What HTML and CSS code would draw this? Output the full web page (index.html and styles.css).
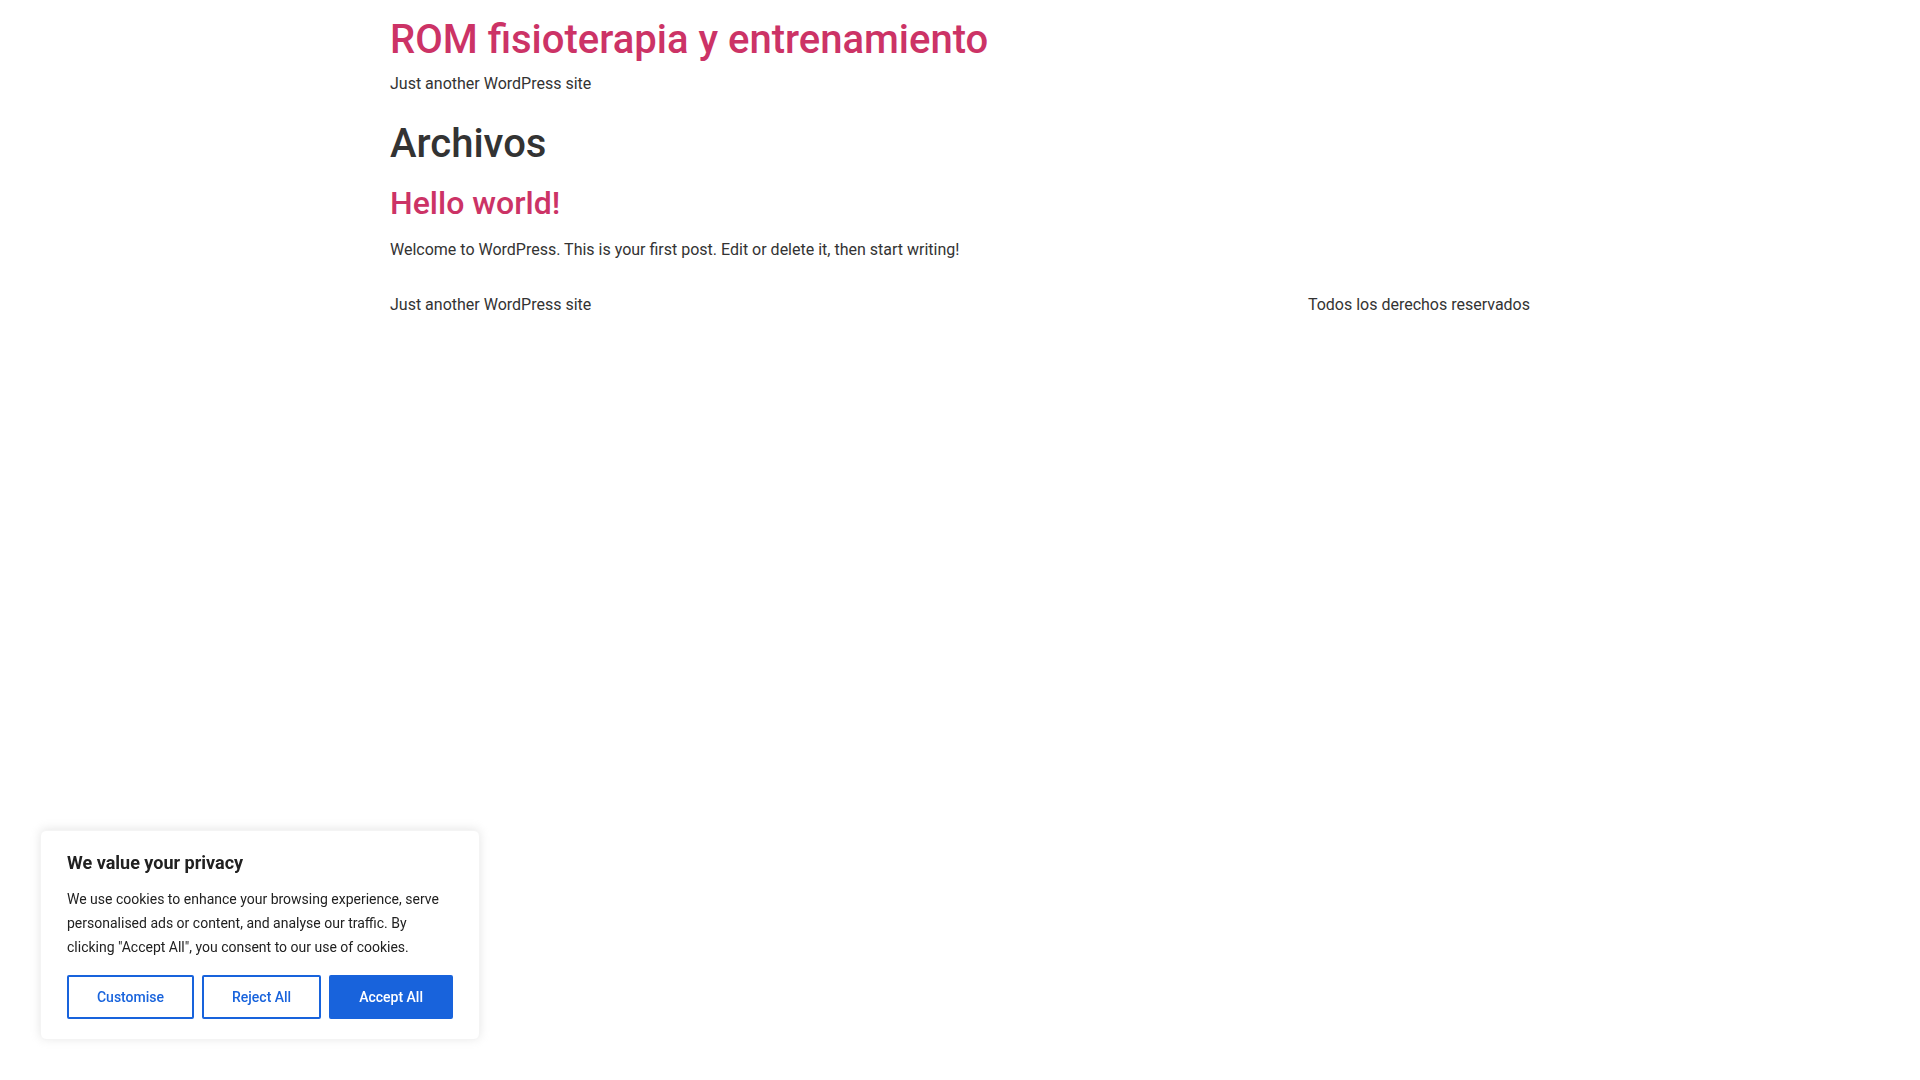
FILE: index.html
```html
<!DOCTYPE html>
<html lang="es">
<head>
<meta charset="utf-8">
<title>Archivos - ROM fisioterapia y entrenamiento</title>
<link rel="stylesheet" href="styles.css">
</head>
<body>
<header class="site-header">
  <div class="site-branding">
    <h1 class="site-title"><a href="#">ROM fisioterapia y entrenamiento</a></h1>
    <p class="site-description">Just another WordPress site</p>
  </div>
</header>
<main class="site-main">
  <div class="page-header">
    <h1 class="entry-title">Archivos</h1>
  </div>
  <div class="page-content">
    <article class="post">
      <h2 class="post-title"><a href="#">Hello world!</a></h2>
      <p>Welcome to WordPress. This is your first post. Edit or delete it, then start writing!</p>
    </article>
  </div>
</main>
<footer class="site-footer">
  <div class="footer-inner">
    <p class="footer-description">Just another WordPress site</p>
    <p class="copyright">Todos los derechos reservados</p>
  </div>
</footer>

<div class="cky-consent">
  <div class="cky-bar">
    <p class="cky-title">We value your privacy</p>
    <p class="cky-notice">We use cookies to enhance your browsing experience, serve personalised ads or content, and analyse our traffic. By clicking "Accept All", you consent to our use of cookies.</p>
    <div class="cky-buttons">
      <button class="cky-btn cky-btn-outline">Customise</button>
      <button class="cky-btn cky-btn-outline">Reject All</button>
      <button class="cky-btn cky-btn-accept">Accept All</button>
    </div>
  </div>
</div>
</body>
</html>
```
FILE: styles.css
```css
html, body {
  margin: 0;
  padding: 0;
}
body {
  background: #fff;
  color: #333;
  font-family: Roboto, "Liberation Sans", sans-serif;
  font-size: 16px;
  line-height: 1.5;
}
a {
  color: #c36;
  text-decoration: none;
}
h1, h2 {
  font-weight: 500;
  line-height: 1.2;
  margin: 0;
}
h1 { font-size: 40px; }
h2 { font-size: 32px; }
p { margin: 0; }

.site-header,
.site-main,
.site-footer {
  max-width: 1140px;
  margin: 0 auto;
  box-sizing: border-box;
}
.site-header {
  padding: 16px 0;
}
.site-title {
  margin-bottom: 8px;
}
.site-main {
  padding-top: 8px;
}
.page-header .entry-title {
  margin-bottom: 16px;
}
.post-title {
  margin-bottom: 16px;
}
.post p {
  margin-bottom: 14.4px;
}
.site-footer {
  padding: 16px 0;
}
.footer-inner {
  display: flex;
  justify-content: space-between;
  align-items: center;
}

/* Cookie banner */
.cky-consent {
  position: fixed;
  left: 40px;
  bottom: 40px;
  width: 440px;
  z-index: 100;
}
.cky-bar {
  background: #fff;
  border: 1px solid #f4f4f4;
  border-radius: 6px;
  box-shadow: 0 -1px 10px 0 rgba(172, 171, 171, 0.3);
  padding: 20px 26px;
  box-sizing: border-box;
  color: #212121;
}
.cky-title {
  font-size: 18px;
  line-height: 24px;
  font-weight: 700;
  margin: 0 0 12px;
}
.cky-notice {
  font-size: 14px;
  line-height: 24px;
}
.cky-buttons {
  display: flex;
  align-items: center;
  gap: 8px;
  margin-top: 16px;
}
.cky-btn {
  flex: auto;
  font-family: inherit;
  font-size: 14px;
  line-height: 24px;
  font-weight: 500;
  padding: 8px;
  border: 2px solid #1863dc;
  border-radius: 2px;
  text-align: center;
  cursor: pointer;
}
.cky-btn-outline {
  background: transparent;
  color: #1863dc;
}
.cky-btn-accept {
  background: #1863dc;
  color: #fff;
}
```
